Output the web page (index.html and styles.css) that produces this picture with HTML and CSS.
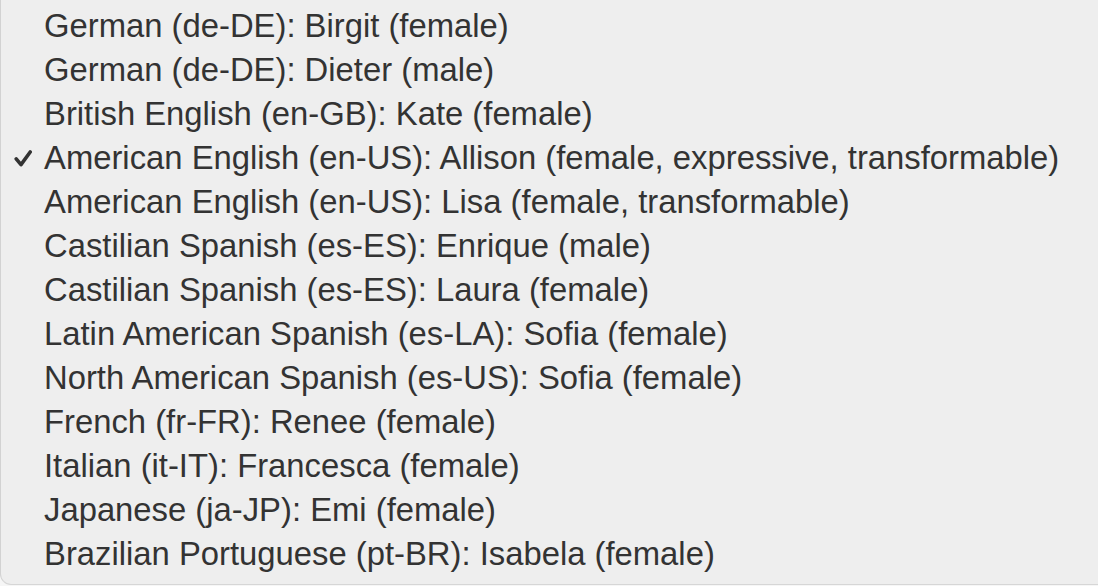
FILE: index.html
```html
<!DOCTYPE html>
<html lang="en">
<head>
    <meta charset="UTF-8">
    <title>Voices</title>
    <link rel="stylesheet" href="styles.css">
</head>
<body>
    <!-- voice menu -->
    <ul class="menu">
        <li class="item">German (de-DE): Birgit (female)</li>
        <li class="item">German (de-DE): Dieter (male)</li>
        <li class="item">British English (en-GB): Kate (female)</li>
        <li class="item checked">
            <svg class="check" width="18" height="17" viewBox="0 0 18 17">
                <polyline points="2.2,8.8 7,14.6 16.2,2" fill="none" stroke="#333" stroke-width="3.6" stroke-linecap="round" stroke-linejoin="round"/>
            </svg>American English (en-US): Allison (female, expressive, transformable)
        </li>
        <li class="item">American English (en-US): Lisa (female, transformable)</li>
        <li class="item">Castilian Spanish (es-ES): Enrique (male)</li>
        <li class="item">Castilian Spanish (es-ES): Laura (female)</li>
        <li class="item">Latin American Spanish (es-LA): Sofia (female)</li>
        <li class="item">North American Spanish (es-US): Sofia (female)</li>
        <li class="item">French (fr-FR): Renee (female)</li>
        <li class="item">Italian (it-IT): Francesca (female)</li>
        <li class="item">Japanese (ja-JP): Emi (female)</li>
        <li class="item">Brazilian Portuguese (pt-BR): Isabela (female)</li>
    </ul>
</body>
</html>
```

FILE: styles.css
```css
* {
    margin: 0;
    padding: 0;
    box-sizing: border-box;
}

body {
    font-family: "Liberation Sans", Arial, sans-serif;
    background-color: #f6f6f6;
    overflow: hidden;
}

.menu {
    list-style: none;
    width: 1110px;
    height: 585px;
    padding-top: 4px;
    background-color: #eeeeee;
    border-left: 1px solid #d2d2d2;
    border-bottom: 1px solid #d6d6d6;
    border-bottom-left-radius: 11px;
}

.item {
    height: 44px;
    line-height: 44px;
    padding-left: 43px;
    font-size: 32.8px;
    color: #333333;
    white-space: nowrap;
    position: relative;
}

.check {
    position: absolute;
    left: 13px;
    top: 14px;
}
```
